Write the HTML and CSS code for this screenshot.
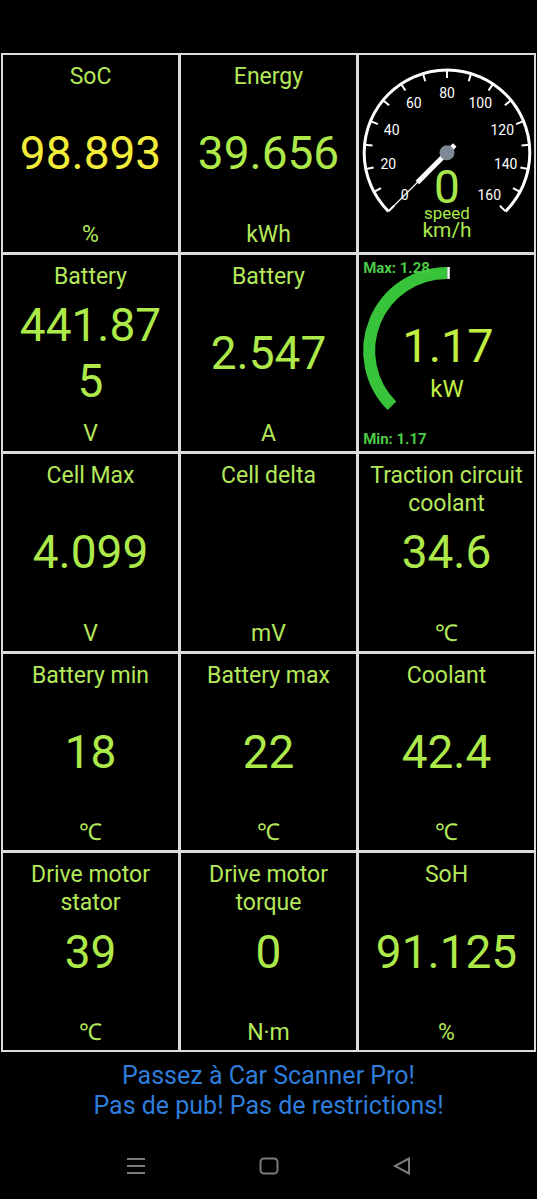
FILE: index.html
```html
<!DOCTYPE html>
<html lang="fr">
<head>
  <meta charset="UTF-8">
  <meta name="viewport" content="width=device-width, initial-scale=1.0">
  <title>Car Scanner – Tableau de bord</title>
  <link rel="stylesheet" href="styles.css">
</head>
<body>
  <div class="statusbar"></div>

  <div class="board">
    <div class="cell">
      <div class="label">SoC</div>
      <div class="value yellow">98.893</div>
      <div class="unit">%</div>
    </div>
    <div class="cell">
      <div class="label">Energy</div>
      <div class="value">39.656</div>
      <div class="unit">kWh</div>
    </div>
    <!-- speed gauge -->
    <div class="cell gauge">
      <svg viewBox="0 0 175 197">
        <path class="dial" d="M29.3 156.7 A83 83 0 1 1 146.7 156.7"/>
        <g class="ticks">
          <line x1="88" y1="15" x2="88" y2="23" transform="rotate(-135 88 98)"/>
          <line x1="88" y1="15" x2="88" y2="23" transform="rotate(-118.125 88 98)"/>
          <line x1="88" y1="15" x2="88" y2="23" transform="rotate(-101.25 88 98)"/>
          <line x1="88" y1="15" x2="88" y2="23" transform="rotate(-84.375 88 98)"/>
          <line x1="88" y1="15" x2="88" y2="23" transform="rotate(-67.5 88 98)"/>
          <line x1="88" y1="15" x2="88" y2="23" transform="rotate(-50.625 88 98)"/>
          <line x1="88" y1="15" x2="88" y2="23" transform="rotate(-33.75 88 98)"/>
          <line x1="88" y1="15" x2="88" y2="23" transform="rotate(-16.875 88 98)"/>
          <line x1="88" y1="15" x2="88" y2="23"/>
          <line x1="88" y1="15" x2="88" y2="23" transform="rotate(16.875 88 98)"/>
          <line x1="88" y1="15" x2="88" y2="23" transform="rotate(33.75 88 98)"/>
          <line x1="88" y1="15" x2="88" y2="23" transform="rotate(50.625 88 98)"/>
          <line x1="88" y1="15" x2="88" y2="23" transform="rotate(67.5 88 98)"/>
          <line x1="88" y1="15" x2="88" y2="23" transform="rotate(84.375 88 98)"/>
          <line x1="88" y1="15" x2="88" y2="23" transform="rotate(101.25 88 98)"/>
          <line x1="88" y1="15" x2="88" y2="23" transform="rotate(118.125 88 98)"/>
          <line x1="88" y1="15" x2="88" y2="23" transform="rotate(135 88 98)"/>
        </g>
        <g class="scale">
          <text x="45.6" y="145.4">0</text>
          <text x="29.2" y="114.7">20</text>
          <text x="32.6" y="80">40</text>
          <text x="54.7" y="53.1">60</text>
          <text x="88" y="43">80</text>
          <text x="121.3" y="53.1">100</text>
          <text x="143.4" y="80">120</text>
          <text x="146.8" y="114.7">140</text>
          <text x="130.4" y="145.4">160</text>
        </g>
        <text class="speed-value" x="88" y="148">0</text>
        <text class="speed-name" x="88" y="164">speed</text>
        <text class="speed-unit" x="88" y="182">km/h</text>
        <g transform="rotate(-135 88 98)">
          <line class="needle-thin" x1="88" y1="98" x2="88" y2="18"/>
          <line class="needle" x1="88" y1="109" x2="88" y2="56"/>
          <circle class="hub" cx="88" cy="98" r="7.5"/>
        </g>
      </svg>
    </div>

    <div class="cell">
      <div class="label">Battery</div>
      <div class="value">441.875</div>
      <div class="unit">V</div>
    </div>
    <div class="cell">
      <div class="label">Battery</div>
      <div class="value">2.547</div>
      <div class="unit">A</div>
    </div>
    <!-- power gauge -->
    <div class="cell gauge">
      <svg viewBox="0 0 175 197">
        <path class="power-arc" d="M32.85 151.15 A78 78 0 0 1 88 18"/>
        <line class="power-max" x1="89.5" y1="12" x2="89.5" y2="24"/>
        <text class="minmax" x="4" y="18">Max: 1.28</text>
        <text class="minmax" x="4" y="189">Min: 1.17</text>
        <text class="power-value" x="89" y="107">1.17</text>
        <text class="power-unit" x="88" y="142">kW</text>
      </svg>
    </div>

    <div class="cell">
      <div class="label">Cell Max</div>
      <div class="value">4.099</div>
      <div class="unit">V</div>
    </div>
    <div class="cell">
      <div class="label">Cell delta</div>
      <div class="value"></div>
      <div class="unit">mV</div>
    </div>
    <div class="cell">
      <div class="label">Traction circuit coolant</div>
      <div class="value">34.6</div>
      <div class="unit">℃</div>
    </div>

    <div class="cell">
      <div class="label">Battery min</div>
      <div class="value">18</div>
      <div class="unit">℃</div>
    </div>
    <div class="cell">
      <div class="label">Battery max</div>
      <div class="value">22</div>
      <div class="unit">℃</div>
    </div>
    <div class="cell">
      <div class="label">Coolant</div>
      <div class="value">42.4</div>
      <div class="unit">℃</div>
    </div>

    <div class="cell">
      <div class="label">Drive motor stator</div>
      <div class="value">39</div>
      <div class="unit">℃</div>
    </div>
    <div class="cell">
      <div class="label">Drive motor torque</div>
      <div class="value">0</div>
      <div class="unit">N·m</div>
    </div>
    <div class="cell">
      <div class="label">SoH</div>
      <div class="value">91.125</div>
      <div class="unit">%</div>
    </div>
  </div>

  <div class="promo">
    Passez à Car Scanner Pro!<br>
    Pas de pub! Pas de restrictions!
  </div>

  <div class="navbar">
    <svg class="nav-icon" viewBox="0 0 20 18">
      <line x1="1" y1="2" x2="19" y2="2"/>
      <line x1="1" y1="9" x2="19" y2="9"/>
      <line x1="1" y1="16" x2="19" y2="16"/>
    </svg>
    <svg class="nav-icon" viewBox="0 0 20 18">
      <rect x="1.5" y="1.5" width="17" height="15" rx="3.5"/>
    </svg>
    <svg class="nav-icon" viewBox="0 0 20 18">
      <path d="M17 1.5 L3 9 L17 16.5 Z"/>
    </svg>
  </div>
</body>
</html>
```

FILE: styles.css
```css
body {
  margin: 0;
  background: #000;
  font-family: Roboto, "Noto Sans", "DejaVu Sans", sans-serif;
  color: #b4e85a;
}
.statusbar {
  height: 53px;
}
.board {
  display: grid;
  grid-template-columns: repeat(3, 1fr);
  grid-template-rows: repeat(5, 1fr);
  gap: 3px;
  padding: 2px;
  margin: 0 1px;
  height: 999px;
  box-sizing: border-box;
  background: #dcdcdc;
}
.cell {
  display: grid;
  background: #000;
  text-align: center;
  overflow: hidden;
  min-width: 0;
}
.cell > div {
  grid-area: 1 / 1;
}
.label {
  align-self: start;
  padding: 8px 3px 0;
  font-size: 23px;
  line-height: 28px;
}
.value {
  align-self: center;
  padding: 0 6px;
  font-size: 46px;
  line-height: 56px;
  color: #aee94a;
  overflow-wrap: anywhere;
}
.value.yellow {
  color: #f3ec3a;
}
.unit {
  align-self: end;
  padding-bottom: 4px;
  font-size: 23px;
  line-height: 27px;
}
.gauge {
  display: block;
}
.gauge svg {
  display: block;
  width: 100%;
  height: 100%;
}
.dial {
  fill: none;
  stroke: #fff;
  stroke-width: 3;
}
.ticks line {
  stroke: #fff;
  stroke-width: 2;
}
.scale text {
  fill: #fff;
  font-size: 14px;
  text-anchor: middle;
}
.speed-value {
  fill: #a8e84a;
  font-size: 46px;
  text-anchor: middle;
}
.speed-name {
  fill: #a8e84a;
  font-size: 17px;
  text-anchor: middle;
}
.speed-unit {
  fill: #a8e84a;
  font-size: 21px;
  text-anchor: middle;
}
.needle-thin {
  stroke: #fff;
  stroke-width: 1.2;
}
.needle {
  stroke: #fff;
  stroke-width: 5;
}
.hub {
  fill: #7d8997;
}
.power-arc {
  fill: none;
  stroke: #38c43a;
  stroke-width: 12;
}
.power-max {
  stroke: #fff;
  stroke-width: 2.5;
}
.minmax {
  fill: #4cc946;
  font-size: 15px;
  font-weight: bold;
}
.power-value {
  fill: #c2ee42;
  font-size: 47px;
  text-anchor: middle;
}
.power-unit {
  fill: #c2ee42;
  font-size: 24px;
  text-anchor: middle;
}
.promo {
  padding-top: 9px;
  text-align: center;
  font-size: 25px;
  line-height: 30px;
  color: #2e7ddb;
}
.navbar {
  display: flex;
  justify-content: center;
  gap: 113px;
  margin-top: 36px;
}
.nav-icon {
  width: 20px;
  height: 18px;
  fill: none;
  stroke: #7a7a7a;
  stroke-width: 2;
}
```
